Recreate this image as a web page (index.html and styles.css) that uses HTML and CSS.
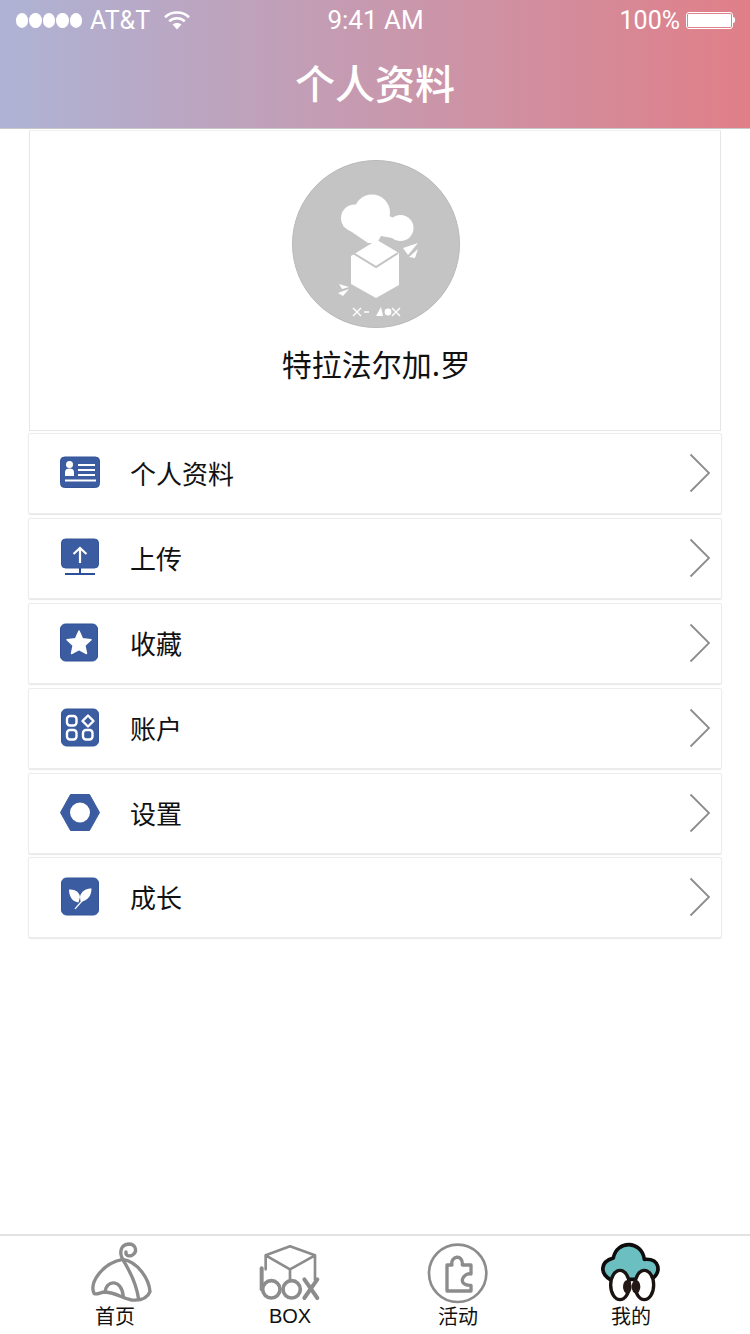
FILE: index.html
```html
<!DOCTYPE html>
<html lang="zh">
<head>
<meta charset="utf-8">
<title>个人资料</title>
<link rel="stylesheet" href="styles.css">
</head>
<body>
<div class="screen">
  <header class="header">
    <div class="status">
      <div class="status-left">
        <span class="dots"><i></i><i></i><i></i><i></i><i></i></span>
        <span class="carrier">AT&amp;T</span>
        <svg class="wifi" viewBox="0 0 26 20"><path d="M1 7.2C7.6 1 18.4 1 25 7.2" fill="none" stroke="#fff" stroke-width="2.6"/><path d="M5.2 11.2C9.600 7.2 16.400 7.2 20.800 11.2" fill="none" stroke="#fff" stroke-width="2.600"/><path d="M8.600 14.400C11 12.400 15 12.400 17.400 14.400L13 19.400Z" fill="#fff"/></svg>
      </div>
      <div class="time">9:41 AM</div>
      <div class="status-right">
        <span class="percent">100%</span>
        <span class="battery"><b></b></span><span class="nub"></span>
      </div>
    </div>
    <h1 class="title">个人资料</h1>
  </header>

  <main class="content">
    <section class="profile">
      <svg class="avatar" viewBox="0 0 168 168">
        <circle cx="84" cy="84" r="83.500" fill="#c4c4c4" stroke="#b9b9b9"/>
        <g fill="#fff">
          <circle cx="80" cy="52.500" r="18"/><circle cx="62.500" cy="58" r="13.500"/><circle cx="108.500" cy="68" r="13"/>
          <path d="M51 66L76 83H85L89 76L100 78L106 60L84 50L60 56Z"/>
          <path d="M59 96L85 80L107 93V125L84 138L59 124Z"/>
          <path d="M111 88L126 83L116 95Z"/>
          <path d="M117 97L126 89L123 98Z"/>
          <path d="M47 124L57 127L50 129Z"/>
          <path d="M46 133L57 129L51 136Z"/>
          <path d="M84 156L89 147L91 156Z"/>
          <circle cx="96" cy="152" r="3.400"/>
        </g>
        <path d="M61 93L84 107L106 93" fill="none" stroke="#c4c4c4" stroke-width="2"/>
        <path d="M61 148L69 156M69 148L61 156M72 152H77M100 148L108 156M108 148L100 156" fill="none" stroke="#fff" stroke-width="1.400"/>
      </svg>
      <div class="name">特拉法尔加.罗</div>
    </section>

    <ul class="menu">
      <li class="row">
        <svg class="row-icon" viewBox="0 0 40 40"><rect x="0.500" y="4" width="39" height="30.500" rx="4" fill="#3b5ca0" stroke="#35559a"/><circle cx="9.500" cy="11.500" r="3.500" fill="#fff"/><path d="M5 23V19C5 16.500 7 15.500 9.500 15.500S14 16.500 14 19V23Z" fill="#fff"/><path d="M18 12H35M18 17H35M18 22H35" stroke="#fff" stroke-width="1.800"/><path d="M5 27.500H36" stroke="#fff" stroke-width="2"/></svg>
        <span class="row-label">个人资料</span>
        <svg class="chevron" viewBox="0 0 22 40"><path d="M1.500 1.500L20 20L1.500 38.500" fill="none" stroke="#8c8c8c" stroke-width="1.800"/></svg>
      </li>
      <li class="row">
        <svg class="row-icon" viewBox="0 0 40 40"><rect x="1.500" y="1" width="37" height="29" rx="4" fill="#3b5ca0" stroke="#35559a"/><path d="M20 25V10M13.500 16L20 10L26.500 16" fill="none" stroke="#fff" stroke-width="2.200"/><path d="M20 30V35M5 36H35" stroke="#2c4f99" stroke-width="2"/></svg>
        <span class="row-label">上传</span>
        <svg class="chevron" viewBox="0 0 22 40"><path d="M1.500 1.500L20 20L1.500 38.500" fill="none" stroke="#8c8c8c" stroke-width="1.800"/></svg>
      </li>
      <li class="row">
        <svg class="row-icon" viewBox="0 0 40 40"><rect x="0.500" y="1" width="37" height="37" rx="5" fill="#3b5ca0" stroke="#2f5097"/><path d="M19 8L22.500 15.800L31 16.800L24.800 22.500L26.500 30.500L19 26.500L11.500 30.500L13.200 22.500L7 16.800L15.500 15.800Z" fill="#fff" stroke="#fff" stroke-width="1.500" stroke-linejoin="round"/></svg>
        <span class="row-label">收藏</span>
        <svg class="chevron" viewBox="0 0 22 40"><path d="M1.500 1.500L20 20L1.500 38.500" fill="none" stroke="#8c8c8c" stroke-width="1.800"/></svg>
      </li>
      <li class="row">
        <svg class="row-icon" viewBox="0 0 40 40"><rect x="1.500" y="1" width="37" height="37" rx="5" fill="#3b5ca0" stroke="#35559a"/><g fill="none" stroke="#fff" stroke-width="2.400"><rect x="7" y="8" width="9.500" height="9.500" rx="3"/><rect x="7" y="22" width="9.500" height="9.500" rx="3"/><rect x="23" y="22" width="9.500" height="9.500" rx="3"/><path d="M28 7.500L33.500 13L28 18.500L22.500 13Z" stroke-linejoin="round"/></g></svg>
        <span class="row-label">账户</span>
        <svg class="chevron" viewBox="0 0 22 40"><path d="M1.500 1.500L20 20L1.500 38.500" fill="none" stroke="#8c8c8c" stroke-width="1.800"/></svg>
      </li>
      <li class="row">
        <svg class="row-icon" viewBox="0 0 40 40"><path d="M0.500 19.500L10.500 1.500H29.500L39.500 19.500L29.500 37.500H10.500Z" fill="#3b5ca0" stroke="#3b5ca0" stroke-linejoin="round" stroke-width="1"/><circle cx="20" cy="19.500" r="10" fill="#fff"/></svg>
        <span class="row-label">设置</span>
        <svg class="chevron" viewBox="0 0 22 40"><path d="M1.500 1.500L20 20L1.500 38.500" fill="none" stroke="#8c8c8c" stroke-width="1.800"/></svg>
      </li>
      <li class="row">
        <svg class="row-icon" viewBox="0 0 40 40"><rect x="1.500" y="1" width="37" height="37" rx="5" fill="#3b5ca0" stroke="#35559a"/><path d="M9 12.500C15 12 19.500 15 20 20L18.500 25.500C13 25 9 20 9 12.500Z" fill="#fff"/><path d="M31.500 11.500C26 11.500 21.500 14 20 19.500L20.500 24.500C27 24.500 31.500 19 31.500 11.500Z" fill="#fff"/><path d="M15 32C18 28 22 24 27 19" fill="none" stroke="#fff" stroke-width="1.200"/></svg>
        <span class="row-label">成长</span>
        <svg class="chevron" viewBox="0 0 22 40"><path d="M1.500 1.500L20 20L1.500 38.500" fill="none" stroke="#8c8c8c" stroke-width="1.800"/></svg>
      </li>
    </ul>
  </main>

  <nav class="tabbar">
    <div class="tab">
      <svg class="tab-icon tab-icon-home" viewBox="90 36 186 186"><g fill="none" stroke="#8c8c8c" stroke-width="10" stroke-linecap="round" stroke-linejoin="round"><path d="M102 190C88 160 125 100 188 88C235 95 268 150 270 185C262 206 238 212 215 210C185 205 170 188 135 186C122 186 110 196 102 190Z"/><path d="M136 186C136 150 186 145 190 200"/><path d="M188 88C208 120 230 165 236 208"/><path d="M188 88C176 64 184 44 206 42C228 42 234 66 216 76C206 80 196 76 198 66"/></g></svg>
      <span class="tab-label">首页</span>
    </div>
    <div class="tab">
      <svg class="tab-icon" viewBox="597 36 186 186"><g fill="none" stroke="#8c8c8c" stroke-linecap="round" stroke-linejoin="round"><path stroke-width="8" d="M617 118V76L690 49L765 76V150M617 76L690 118L765 76M690 118V152"/><path stroke-width="12" d="M605 115V178"/><circle stroke-width="11" cx="634" cy="178" r="26"/><circle stroke-width="11" cx="695" cy="178" r="26"/><path stroke-width="12" d="M733 148L772 204M772 148L733 204"/></g></svg>
      <span class="tab-label tab-label-latin">BOX</span>
    </div>
    <div class="tab">
      <svg class="tab-icon" viewBox="81 36 186 186"><circle cx="173" cy="130" r="86" fill="none" stroke="#8c8c8c" stroke-width="8"/><path d="M141 105H156C150 78 190 70 187 105H213V132C188 126 170 168 213 166V183H141Z" fill="none" stroke="#8c8c8c" stroke-width="10" stroke-linejoin="round"/></svg>
      <span class="tab-label">活动</span>
    </div>
    <div class="tab">
      <svg class="tab-icon" viewBox="600 36 186 186"><path d="M630 148C600 130 600 95 640 84C650 30 725 30 733 88C780 85 785 125 755 148Z" fill="#6cbfc0" stroke="#0d0d0d" stroke-width="11" stroke-linejoin="round"/><ellipse cx="660" cy="165" rx="28" ry="44" fill="#fff" stroke="#1a1311" stroke-width="10"/><ellipse cx="733" cy="165" rx="28" ry="44" fill="#fff" stroke="#1a1311" stroke-width="10"/><ellipse cx="682" cy="170" rx="13" ry="20" fill="#231815"/><ellipse cx="708" cy="170" rx="13" ry="20" fill="#231815"/></svg>
      <span class="tab-label">我的</span>
    </div>
  </nav>
</div>
</body>
</html>
```

FILE: styles.css
```css
* { box-sizing: border-box; }
html, body { margin: 0; padding: 0; background: #fff; }
body { font-family: "Noto Sans CJK SC", "Liberation Sans", sans-serif; color: #111; }
.screen { width: 750px; height: 1334px; display: flex; flex-direction: column; overflow: hidden; }

.header { height: 129px; background: linear-gradient(90deg, #aeb3d5 0%, #e07f88 100%); border-bottom: 1px solid #c8c8c8; color: #fff; flex: none; }
.status { height: 40px; display: grid; grid-template-columns: 1fr auto 1fr; align-items: center; padding: 0 15px 0 16px; font-family: Roboto, "Liberation Sans", sans-serif; font-weight: 400; font-size: 25px; }
.status-left { display: flex; align-items: center; }
.dots { display: flex; gap: 1px; }
.dots i { width: 12.400px; height: 15px; border-radius: 50%; background: #fff; display: block; }
.carrier { margin-left: 8px; }
.wifi { width: 26px; height: 20px; margin-left: 14px; }
.time { font-size: 26px; }
.status-right { display: flex; align-items: center; justify-content: flex-end; }
.battery { width: 47px; height: 17px; border: 1px solid #fff; border-radius: 3px; padding: 1px; margin-left: 6px; display: block; }
.battery b { display: block; height: 100%; background: #fff; border-radius: 1px; }
.nub { width: 2px; height: 6px; background: #fff; border-radius: 0 2px 2px 0; }
.title { margin: 0; height: 88px; display: flex; align-items: center; justify-content: center; font-size: 40px; font-weight: 500; padding-bottom: 4px; }

.content { padding: 1px 28px 0; flex: none; }
.profile { margin: 0 1px; height: 301px; border: 1px solid #e6e6e6; border-top-color: #f0f0f0; display: flex; flex-direction: column; align-items: center; padding: 29px 0 0 2px; }
.avatar { width: 168px; height: 168px; display: block; }
.name { font-size: 30px; line-height: 44px; margin-top: 13px; color: #111; }

.menu { list-style: none; margin: 2px 0 0; padding: 0; display: flex; flex-direction: column; gap: 4px; }
.row { height: 81px; border: 1px solid #ececec; border-radius: 2px; box-shadow: 0 1px 1px #e8e8e8; display: flex; align-items: center; padding: 0 10px 2px 31px; }
.row:last-child { margin-top: -1px; }
.row-icon { width: 40px; height: 40px; flex: none; display: block; }
.row-label { font-size: 26px; margin-left: 30px; flex: 1; color: #111; line-height: 36px; }
.chevron { width: 22px; height: 40px; flex: none; display: block; }

.tabbar { margin-top: auto; height: 100px; border-top: 2px solid #e2e2e2; display: grid; grid-template-columns: 230px 120px 216px 130px; padding-top: 6px; flex: none; }
.tab { display: flex; flex-direction: column; align-items: center; }
.tab-icon { width: 62px; height: 62px; display: block; }
.tab-icon-home { margin-left: 12px; }
.tab-label { font-size: 20px; line-height: 28px; margin-top: -2px; color: #111; }
.tab-label-latin { font-family: "Liberation Sans", sans-serif; }
```
